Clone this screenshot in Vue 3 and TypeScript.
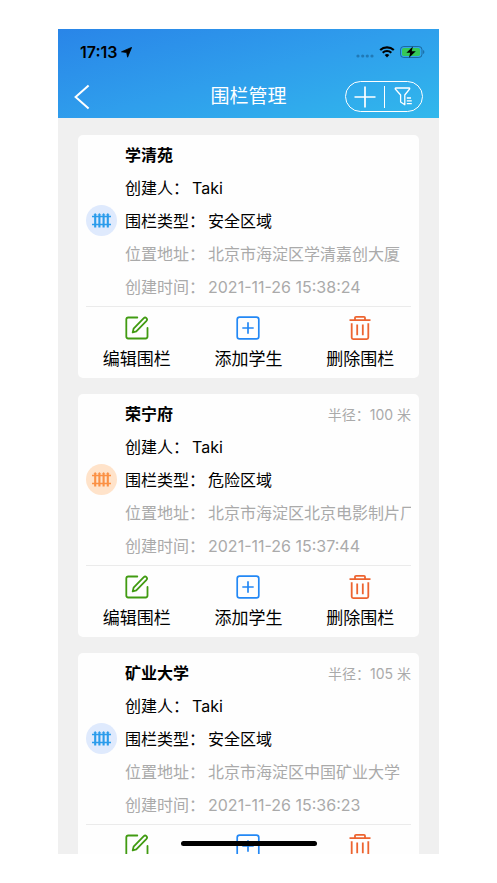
<script setup lang="ts">
interface Fence {
  id: number
  name: string
  creator: string
  danger: boolean
  address: string
  createdAt: string
  radius?: number
}

const fences: Fence[] = [
  { id: 1, name: '学清苑', creator: 'Taki', danger: false, address: '北京市海淀区学清嘉创大厦', createdAt: '2021-11-26 15:38:24' },
  { id: 2, name: '荣宁府', creator: 'Taki', danger: true, address: '北京市海淀区北京电影制片厂', createdAt: '2021-11-26 15:37:44', radius: 100 },
  { id: 3, name: '矿业大学', creator: 'Taki', danger: false, address: '北京市海淀区中国矿业大学', createdAt: '2021-11-26 15:36:23', radius: 105 },
]
</script>

<template>
  <div class="page">
    <div class="phone">
      <header class="header">
        <div class="status">
          <span class="clock">17:13</span>
          <svg class="locate" width="11" height="11" viewBox="0 0 11 11"><path d="M10.6.4 6.6 10.2 5.7 5.5.5 4.8Z" fill="#000" stroke="#000" stroke-width=".8" stroke-linejoin="round" /></svg>
          <svg class="dots" width="18" height="4" viewBox="0 0 18 4" fill="#0b3b66" fill-opacity=".4"><circle cx="2" cy="2" r="1.6" /><circle cx="6.7" cy="2" r="1.6" /><circle cx="11.3" cy="2" r="1.6" /><circle cx="16" cy="2" r="1.6" /></svg>
          <svg width="16" height="12" viewBox="0 0 16 12"><path d="M1.2 4.1a9.8 9.8 0 0 1 13.6 0M3.7 6.8a6.2 6.2 0 0 1 8.6 0" fill="none" stroke="#000" stroke-width="2.1" /><path d="M5.7 9.1a3.3 3.3 0 0 1 4.6 0L8 11.5Z" fill="#000" /></svg>
          <svg class="battery" width="25" height="12" viewBox="0 0 25 12">
            <rect x=".5" y=".5" width="21.5" height="11" rx="3.2" fill="none" stroke="#0b3b66" stroke-opacity=".55" />
            <path d="M23.2 4v4c1.5-.6 1.5-3.4 0-4Z" fill="#0b3b66" fill-opacity=".6" />
            <rect x="2" y="2" width="18" height="8" rx="1.8" fill="#35c759" />
            <path d="M12.9.4 6.4 6.8h3.8l-1.2 5 6.8-6.6h-4.1Z" fill="#000" />
          </svg>
        </div>
        <div class="nav">
          <button class="back" type="button" aria-label="返回">
            <svg width="16" height="26" viewBox="0 0 16 26"><path d="M14.6 1.4 1.6 13l13 11.6" fill="none" stroke="#fff" stroke-width="2" /></svg>
          </button>
          <h1 class="title">围栏管理</h1>
          <div class="tools">
            <button class="tool" type="button" aria-label="添加">
              <svg width="22" height="22" viewBox="0 0 22 22"><path d="M11 .5v21M.5 11h21" stroke="#fff" stroke-width="1.7" /></svg>
            </button>
            <span class="split"></span>
            <button class="tool" type="button" aria-label="筛选">
              <svg width="19" height="19" viewBox="0 0 19 19" fill="none" stroke="#fff" stroke-width="1.3" stroke-linejoin="round"><path d="M1.8 1h13.4q.8.2.4 1L10.8 8v9.8L6.6 15V8L1.3 2Q1 1.2 1.8 1ZM12.8 11H17M12.8 13.8h5M12.8 16.6h5" /></svg>
            </button>
          </div>
        </div>
      </header>

      <main class="list">
        <article v-for="f in fences" :key="f.id" class="card">
          <div class="body">
            <span class="badge" :class="{ danger: f.danger }">
              <svg width="19" height="15" viewBox="0 0 19 15" fill="none" stroke="currentColor"><path d="M0 3.4h19M0 11.4h19" stroke-width="1.5" /><path d="M3.2 1v13.6M7.4 1v13.6M11.6 1v13.6M15.8 1v13.6" stroke-width="2.1" /><path d="m2 1.5 1.2-1.2 1.2 1.2M6.2 1.5 7.4.3l1.2 1.2M10.4 1.5 11.6.3l1.2 1.2M14.6 1.5 15.8.3 17 1.5" stroke-width=".7" /></svg>
            </span>
            <div class="info">
              <div class="row head">
                <h2 class="name">{{ f.name }}</h2>
                <span v-if="f.radius" class="radius">半径：{{ f.radius }} 米</span>
              </div>
              <div class="row"><span>创建人：</span><span class="value">{{ f.creator }}</span></div>
              <div class="row"><span>围栏类型：</span><span class="value">{{ f.danger ? '危险区域' : '安全区域' }}</span></div>
              <div class="row muted"><span>位置地址：</span><span class="value">{{ f.address }}</span></div>
              <div class="row muted"><span>创建时间：</span><span class="value">{{ f.createdAt }}</span></div>
            </div>
          </div>
          <div class="actions">
            <button class="action" type="button">
              <svg width="24" height="24" viewBox="0 0 24 24" fill="none" stroke="#419b12" stroke-width="1.8" stroke-linejoin="round" stroke-linecap="round"><path d="M12.3 1.5H3.2q-1.9 0-1.9 1.9v17.2q0 1.9 1.9 1.9h17.4q1.9 0 1.9-1.9V12" /><path stroke-width="1.8" d="m7.7 16.4.9-3.7L18.8 2.1q1.3-1.2 2.6 0t.1 2.7L11.3 15.3Z" /></svg>
              编辑围栏
            </button>
            <button class="action" type="button">
              <svg width="24" height="24" viewBox="0 0 24 24" fill="none" stroke="#2388f5" stroke-width="1.7"><rect x="1.2" y="1.2" width="21.6" height="21.6" rx="2.4" /><path d="M12 6.3v11.4M6.3 12h11.4" /></svg>
              添加学生
            </button>
            <button class="action" type="button">
              <svg width="24" height="24" viewBox="0 0 24 24" fill="none" stroke="#ed6430" stroke-width="1.8" stroke-linejoin="round"><path d="M1.5 4.2h21M7 4.2V1.7Q7 .9 8 .9h8q1 0 1 .8v2.5M3.7 7.2v14.4q0 1.5 1.5 1.5h13.6q1.5 0 1.5-1.5V7.2M9.2 8.6v10.6M14.8 8.6v10.6" /></svg>
              删除围栏
            </button>
          </div>
        </article>
      </main>
      <div class="home"></div>
    </div>
  </div>
</template>

<style>
body {
  background: #fff;
}
</style>

<style scoped>
.page {
  box-sizing: border-box;
  height: 100vh;
  padding: 29px 58px;
  font-family: Inter, "Noto Sans CJK SC", sans-serif;
  font-size: 16px;
  color: #000;
}
.phone {
  position: relative;
  height: 100%;
  overflow: hidden;
  background: #f0f0f0;
}
.header {
  background: linear-gradient(165deg, #2985e8, #2f9eec 50%, #31b8ec);
}
.status {
  display: flex;
  align-items: center;
  height: 46px;
  padding: 0 14px 0 22px;
}
.clock {
  font-size: 16px;
  font-weight: 600;
}
.locate {
  margin-left: 3px;
}
.dots {
  margin: 8px 5px 0 auto;
}
.battery {
  margin-left: 5px;
}
button {
  padding: 0;
  border: 0;
  background: none;
  font: inherit;
  color: inherit;
  cursor: pointer;
}
svg {
  display: block;
  flex: none;
}
.nav {
  display: grid;
  grid-template-columns: 1fr auto 1fr;
  align-items: center;
  height: 43px;
  padding: 0 16px;
}
.back {
  justify-self: start;
}
.title {
  margin: 0;
  font-size: 19px;
  font-weight: 400;
  line-height: 28px;
  color: #fff;
}
.tools {
  display: flex;
  align-items: center;
  justify-self: end;
  box-sizing: border-box;
  width: 78px;
  height: 31px;
  border: 1px solid #fff;
  border-radius: 16px;
}
.tool {
  display: flex;
  flex: 1;
  justify-content: center;
}
.split {
  width: 1px;
  height: 22px;
  background: #fff;
}
.list {
  display: flex;
  flex-direction: column;
  gap: 16px;
  padding: 17px 20px;
}
.card {
  padding: 0 8px;
  border-radius: 5px;
  background: #fefefe;
}
.body {
  display: flex;
  align-items: center;
  gap: 8px;
  border-bottom: 1px solid #ebebeb;
}
.badge {
  display: flex;
  flex: none;
  align-items: center;
  justify-content: center;
  width: 31px;
  height: 31px;
  border-radius: 50%;
  background: #dfeafd;
  color: #2b9ceb;
}
.badge.danger {
  background: #ffe3ca;
  color: #fb9145;
}
.info {
  flex: 1;
  min-width: 0;
  padding: 4px 0 2px;
}
.row {
  display: flex;
  gap: 3px;
  line-height: 33px;
  white-space: nowrap;
}
.row span {
  flex: none;
}
.row .value {
  flex: 1;
  min-width: 0;
  overflow: hidden;
}
.head {
  justify-content: space-between;
}
.name {
  margin: 0;
  font-size: 16px;
  font-weight: 600;
}
.radius {
  font-size: 14px;
  color: #aaa;
}
.muted {
  color: #aaa;
}
.actions {
  display: grid;
  grid-template-columns: repeat(3, 1fr);
  margin: 0 -5px;
  padding: 9px 0 7px;
}
.action {
  display: flex;
  flex-direction: column;
  align-items: center;
  gap: 7px;
  font-size: 17px;
  line-height: 24px;
}
.home {
  position: absolute;
  bottom: 8px;
  left: 50%;
  width: 136px;
  height: 5px;
  border-radius: 3px;
  background: #000;
  transform: translateX(-50%);
}
</style>
